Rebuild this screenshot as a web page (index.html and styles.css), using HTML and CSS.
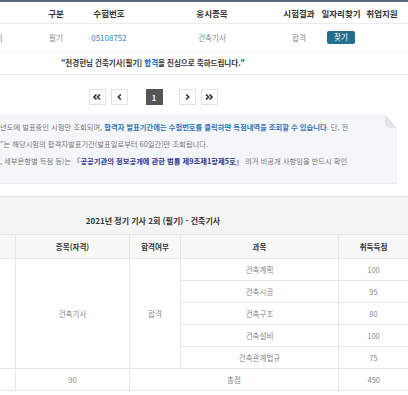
FILE: index.html
```html
<!DOCTYPE html>
<html lang="ko">
<head>
  <meta charset="UTF-8">
  <meta name="viewport" content="width=device-width, initial-scale=1.0">
  <title>합격자 발표 | 득점내역</title>
  <link rel="stylesheet" href="styles.css">
</head>
<body>

  <div class="page">

    <div class="result">
      <div class="result-row result-head">
        <span></span>
        <span>구분</span>
        <span>수험번호</span>
        <span>응시종목</span>
        <span>시험결과</span>
        <span>일자리찾기</span>
        <span>취업지원</span>
      </div>
      <div class="result-row result-data">
        <span>2021년 정기 기사 2회</span>
        <span>필기</span>
        <span class="exam-no">05108752</span>
        <span>건축기사</span>
        <span>합격</span>
        <span><a class="btn-find">찾기</a></span>
        <span></span>
      </div>
      <p class="congrats">"전경헌님 건축기사[필기] <b>합격</b>을 진심으로 축하드립니다."</p>
    </div>

    <div class="paging">
      <a class="pg">
        <svg width="8" height="6" viewBox="0 0 8 6"><path d="M3.5 0.5 1 3l2.5 2.5M7 0.5 4.5 3 7 5.5" fill="none" stroke="#333" stroke-width="1.6"/></svg>
      </a>
      <a class="pg">
        <svg width="5" height="6" viewBox="0 0 5 6"><path d="M3.8 0.5 1.3 3l2.5 2.5" fill="none" stroke="#333" stroke-width="1.6"/></svg>
      </a>
      <a class="pg current">1</a>
      <a class="pg">
        <svg width="5" height="6" viewBox="0 0 5 6"><path d="M1.2 0.5 3.7 3 1.2 5.5" fill="none" stroke="#333" stroke-width="1.6"/></svg>
      </a>
      <a class="pg">
        <svg width="8" height="6" viewBox="0 0 8 6"><path d="M1 0.5 3.5 3 1 5.5M4.5 0.5 7 3 4.5 5.5" fill="none" stroke="#333" stroke-width="1.6"/></svg>
      </a>
    </div>

    <div class="notice">
      <p>년도에 발표중인 시험만 조회되며, <span class="hl">합격자 발표기간에는 수험번호를 클릭하면 득점내역을 조회할 수 있습니다</span>. 단, 전</p>
      <p>"는 해당시험의 합격자발표기간(발표일로부터 60일간)만 조회됩니다.</p>
      <p>, 세부문항별 득점 등)는 <span class="law">『공공기관의 정보공개에 관한 법률 제9조제1항제5호』</span> 의거 비공개 사항임을 반드시 확인</p>
    </div>

    <div class="score-title">2021년 정기 기사 2회 (필기) - 건축기사</div>
    <table class="score">
      <colgroup>
        <col class="c-no">
        <col class="c-name">
        <col class="c-pass">
        <col class="c-subj">
        <col class="c-pt">
      </colgroup>
      <thead>
        <tr>
          <th></th>
          <th>종목(자격)</th>
          <th>합격여부</th>
          <th>과목</th>
          <th>취득득점</th>
        </tr>
      </thead>
      <tbody>
        <tr>
          <td rowspan="5"></td>
          <td rowspan="5">건축기사</td>
          <td rowspan="5">합격</td>
          <td>건축계획</td>
          <td>100</td>
        </tr>
        <tr><td>건축시공</td><td>95</td></tr>
        <tr><td>건축구조</td><td>80</td></tr>
        <tr><td>건축설비</td><td>100</td></tr>
        <tr><td>건축관계법규</td><td>75</td></tr>
        <tr class="sum">
          <td></td>
          <td>90</td>
          <td colspan="2">총점</td>
          <td>450</td>
        </tr>
      </tbody>
    </table>

  </div>

</body>
</html>
```

FILE: styles.css
```css
* {
  box-sizing: border-box;
}
body {
  margin: 0;
  overflow: hidden;
  background: #fff;
  font-family: "Noto Sans CJK KR", "Noto Sans", sans-serif;
  color: #666;
}
.page {
  width: 510px;
  margin-left: -102px;
}

/* 결과 목록 */
.result {
  border-top: 2px solid #56677d;
}
.result-row {
  display: grid;
  grid-template-columns: 141px 34px 72px 134px 40px 44px 38px;
}
.result-row span {
  display: flex;
  justify-content: center;
  align-items: center;
  white-space: nowrap;
}
.result-head {
  height: 22px;
  border-bottom: 1px solid #ececec;
  font-size: 8.5px;
  font-weight: 700;
  color: #333;
}
.result-data {
  height: 27px;
  font-size: 7.5px;
  color: #888;
}
.result-data .exam-no {
  color: #3d7fc1;
  font-size: 8px;
}
.btn-find {
  background: #236f8e;
  color: #fff;
  border-radius: 2px;
  padding: 1px 7px 2px;
  font-size: 7.5px;
  line-height: 10px;
}
.congrats {
  margin: 0;
  height: 24px;
  line-height: 22px;
  text-align: center;
  font-size: 7.5px;
  font-weight: 700;
  color: #333;
  border-top: 1px solid #f4f4f4;
  border-bottom: 1px solid #e6e6e6;
}
.congrats b {
  color: #2f78c2;
}

/* 페이징 */
.paging {
  display: flex;
  justify-content: center;
  gap: 5px;
  margin-top: 14px;
}
.pg {
  width: 17px;
  height: 16px;
  display: flex;
  align-items: center;
  justify-content: center;
  border: 1px solid #e2e2e2;
  background: #fff;
}
.pg.current {
  margin: 0 11px 0 13px;
  background: #555;
  border-color: #555;
  color: #fff;
  font-size: 7.5px;
  font-weight: 700;
}

/* 안내 박스 */
.notice {
  position: relative;
  width: 499px;
  height: 70px;
  margin-top: 9px;
  padding: 5px 0 0 102px;
  background: #f5f6fa;
  border-bottom: 1px solid #ebecf1;
  clip-path: polygon(0 0, calc(100% - 12px) 0, 100% 14px, 100% 100%, 0 100%);
  font-size: 7.3px;
  color: #777;
}
.notice::after {
  content: "";
  position: absolute;
  top: 0;
  right: 0;
  width: 12px;
  height: 14px;
  background: linear-gradient(to bottom left, transparent 50%, #e3e5ec 50%);
  border-bottom-left-radius: 5px;
}
.notice p {
  margin: 0;
  line-height: 17px;
  white-space: nowrap;
}
.notice .hl {
  color: #2f74b8;
  font-weight: 700;
}
.notice .law {
  color: #30358f;
  font-weight: 700;
}

/* 득점 내역 */
.score-title {
  margin-top: 12px;
  height: 38px;
  padding-top: 9px;
  line-height: 29px;
  background: #f4f4f4;
  border-top: 1px solid #e6e6e6;
  text-align: center;
  font-size: 8px;
  font-weight: 700;
  color: #333;
}
.score {
  width: 510px;
  table-layout: fixed;
  border-collapse: collapse;
  font-size: 7.5px;
  color: #888;
}
.c-no { width: 117px; }
.c-name { width: 114px; }
.c-pass { width: 51px; }
.c-subj { width: 158px; }
.c-pt { width: 70px; }
.score th,
.score td {
  border: 1px solid #e6e6e6;
  text-align: center;
  padding: 0;
  white-space: nowrap;
}
.score th {
  height: 24px;
  background: #f8f8f8;
  font-weight: 700;
  color: #333;
}
.score td {
  height: 22px;
}
.score .sum td {
  border-left: none;
  border-right: none;
}
.score .sum td + td {
  border-left: 1px solid #e6e6e6;
}
```
